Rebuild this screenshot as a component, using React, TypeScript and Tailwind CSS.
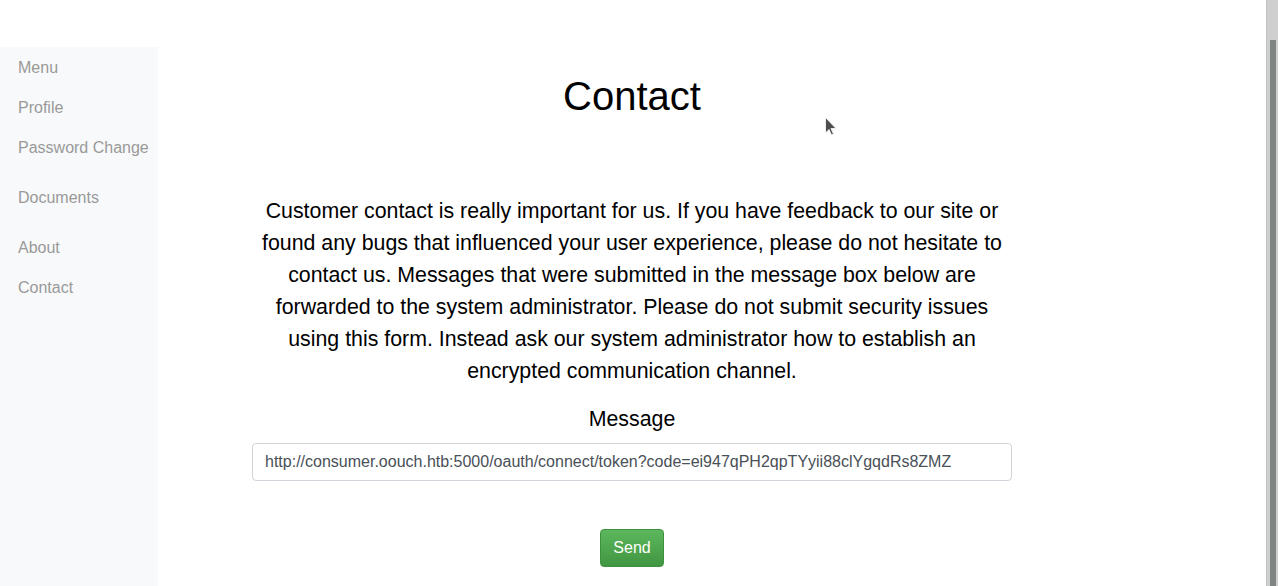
export default function App() {
  return (
    <div className="relative flex h-[586px] w-full overflow-hidden bg-white font-['Liberation_Sans',Arial,sans-serif]">
      <div className="flex flex-1 flex-col">
        <div className="h-[47px]" />
        <div className="flex flex-1">
          <aside className="w-[158px] whitespace-nowrap bg-[#f8f9fa] pt-px text-base leading-6 text-[#999]">
            <div>
              <div className="px-[18px] py-2">Menu</div>
              <div className="px-[18px] py-2">Profile</div>
              <div className="px-[18px] py-2">Password Change</div>
            </div>
            <div className="mt-[10px]">
              <div className="px-[18px] py-2">Documents</div>
            </div>
            <div className="mt-[10px]">
              <div className="px-[18px] py-2">About</div>
              <div className="px-[18px] py-2">Contact</div>
            </div>
          </aside>
          <main className="flex flex-1 flex-col items-center pr-[160px] pt-[25px] text-black">
            <h1 className="text-[40px] leading-[48px]">Contact</h1>
            <p className="mt-[75px] w-[760px] text-center text-[21.33px] leading-8">
              Customer contact is really important for us. If you have feedback to our site or found any bugs that
              influenced your user experience, please do not hesitate to contact us. Messages that were submitted in
              the message box below are forwarded to the system administrator. Please do not submit security issues
              using this form. Instead ask our system administrator how to establish an encrypted communication
              channel.
            </p>
            <label className="mt-4 text-[21.33px] leading-8">Message</label>
            <input
              readOnly
              value="http://consumer.oouch.htb:5000/oauth/connect/token?code=ei947qPH2qpTYyii88clYgqdRs8ZMZ"
              className="mt-2 h-[38px] w-[760px] rounded border border-[#ced4da] px-3 text-base text-[#495057] outline-none"
            />
            <button className="mt-12 h-[38px] w-16 rounded border border-[#3e8f3e] bg-gradient-to-b from-[#5cb85c] to-[#419641] text-base text-white">
              Send
            </button>
          </main>
        </div>
      </div>
      <div className="flex w-3 flex-col border-l border-[#c2c2c2] bg-[#cfcfcf] pt-10">
        <div className="mx-auto w-[6px] flex-1 bg-[#7f8485]" />
      </div>
      <svg className="absolute left-[824px] top-[116px]" width="14" height="22" viewBox="0 0 14 22">
        <path d="M1.5 1.5 L1.5 17 L5 13.5 L7.5 19 L9.5 18 L7 12.5 L12 12.5 Z" fill="#4d4d4d" stroke="#eee" strokeWidth="1" />
      </svg>
    </div>
  );
}
